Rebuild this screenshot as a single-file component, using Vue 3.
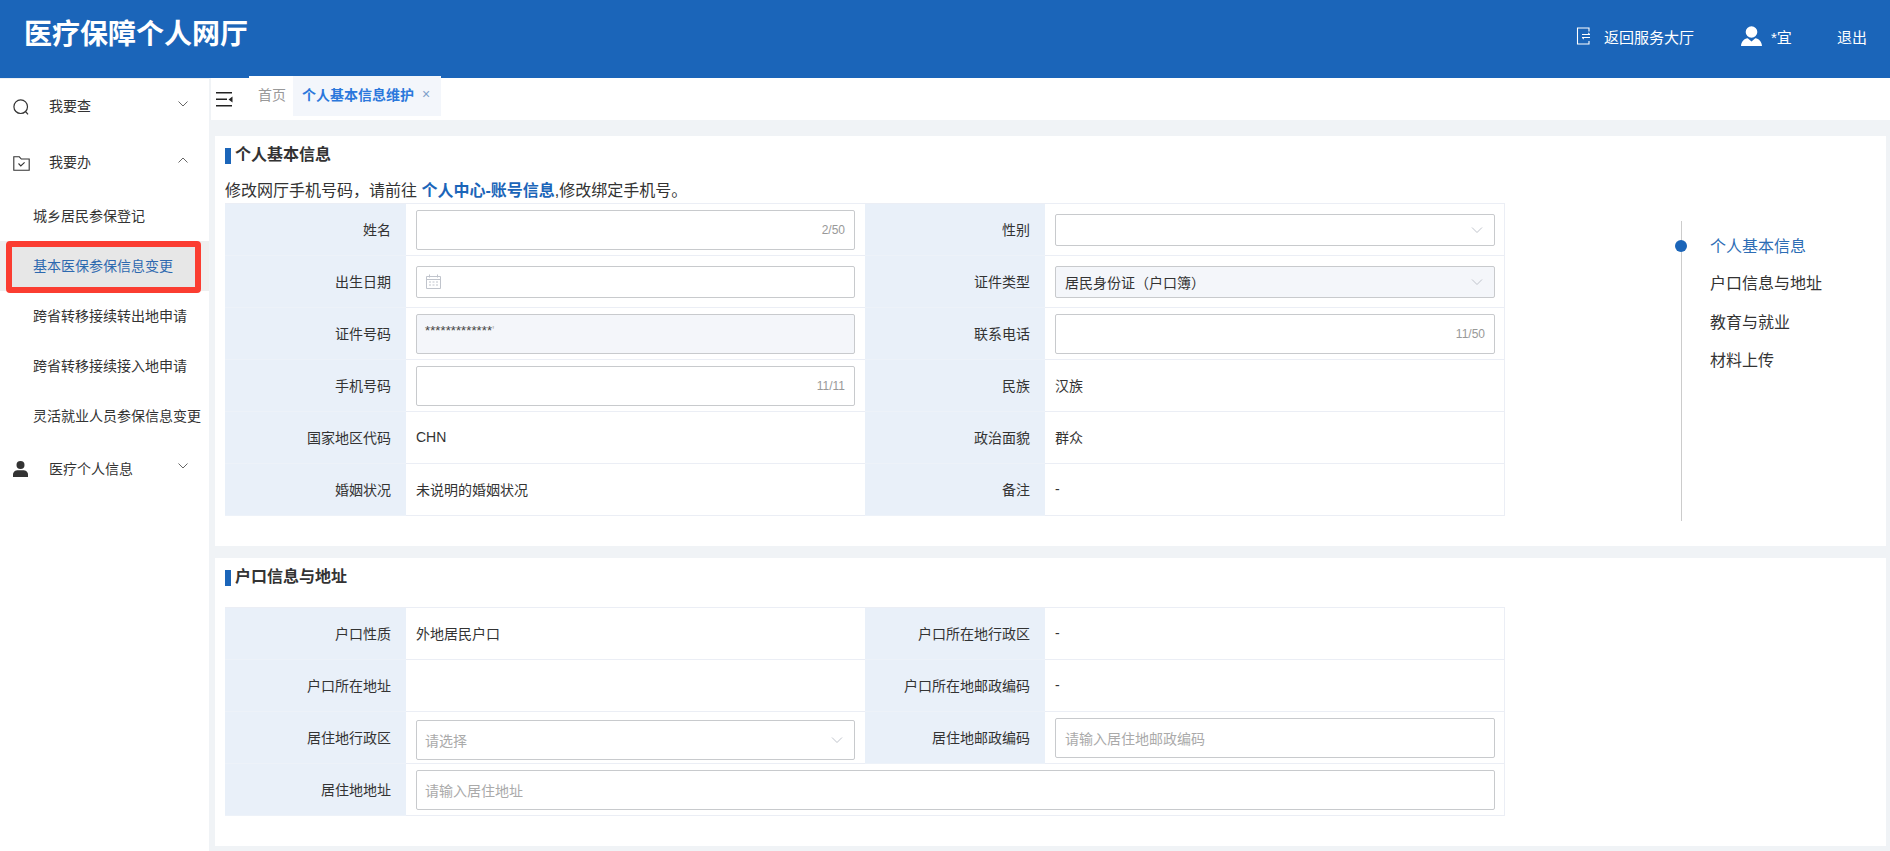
<script setup>
const subMenu = [
  { text: '城乡居民参保登记' },
  { text: '基本医保参保信息变更', active: true },
  { text: '跨省转移接续转出地申请' },
  { text: '跨省转移接续接入地申请' },
  { text: '灵活就业人员参保信息变更' }
]
const anchors = ['个人基本信息', '户口信息与地址', '教育与就业', '材料上传']
</script>

<template>
  <div class="page">
    <header class="top">
      <h1 class="brand">医疗保障个人网厅</h1>
      <div class="top-right">
        <span class="top-link return-link">
          <svg class="door" width="16" height="18" viewBox="0 0 16 18" fill="none" stroke="#fff" stroke-width="1.100">
            <path d="M13 4.500V1H1.500v16H13v-3" />
            <path d="M6 7.500h8l-2-1.600M14 10.500H6l2 1.600" stroke-width="1" />
          </svg>
          返回服务大厅
        </span>
        <span class="top-link user-link">
          <svg width="21" height="20" viewBox="0 0 21 20" fill="#fff">
            <circle cx="10.500" cy="6" r="5.800" />
            <path d="M0 20c.4-4.600 2.800-7 6.700-7.700l3.800 3.300 3.800-3.300c3.900.7 6.300 3.100 6.700 7.700z" />
          </svg>
          <span>*宜</span>
        </span>
        <span class="top-link">退出</span>
      </div>
    </header>

    <div class="body">
      <aside class="side">
        <div class="menu-item">
          <svg class="menu-icon" width="16" height="16" viewBox="0 0 16 16" fill="none" stroke="#333" stroke-width="1.200">
            <circle cx="7.700" cy="7.700" r="6.800" />
            <path d="M12.500 12.500l2.500 2.800" />
          </svg>
          <span class="menu-label">我要查</span>
          <svg class="chev" width="12" height="8" viewBox="0 0 12 8" fill="none" stroke="#666" stroke-width="1"><path d="M1.500 1.500L6 6l4.500-4.500" /></svg>
        </div>
        <div class="menu-item">
          <svg class="menu-icon" width="17" height="15" viewBox="0 0 17 15" fill="none" stroke="#333" stroke-width="1.100">
            <path d="M.8.800h5.500l2 2.200h7.900v11.200H.8z" />
            <path d="M5.500 7.500l2.300 2.400 3.800-3.600" />
          </svg>
          <span class="menu-label">我要办</span>
          <svg class="chev" width="12" height="8" viewBox="0 0 12 8" fill="none" stroke="#666" stroke-width="1"><path d="M1.500 6.500L6 2l4.500 4.500" /></svg>
        </div>
        <div
          v-for="item in subMenu"
          :key="item.text"
          class="sub-item"
          :class="{ active: item.active }"
        >
          {{ item.text }}
          <span v-if="item.active" class="highlight"></span>
        </div>
        <div class="menu-item">
          <svg class="menu-icon" width="15" height="16" viewBox="0 0 15 16" fill="#333">
            <circle cx="7.500" cy="4" r="4" />
            <path d="M0 16v-2.500C0 10.800 2.500 9.300 5 9.300h5c2.500 0 5 1.500 5 4.200V16z" />
          </svg>
          <span class="menu-label">医疗个人信息</span>
          <svg class="chev" width="12" height="8" viewBox="0 0 12 8" fill="none" stroke="#666" stroke-width="1"><path d="M1.500 1.500L6 6l4.500-4.500" /></svg>
        </div>
      </aside>

      <main class="main">
        <div class="tabbar">
          <svg class="collapse" width="17" height="15" viewBox="0 0 17 15" fill="#222">
            <rect x="0" y="0" width="16" height="1.500" />
            <rect x="0" y="6.500" width="11" height="1.500" />
            <rect x="0" y="13" width="16" height="1.500" />
            <path d="M16.500 4.500v6L12.500 7.500z" />
          </svg>
          <div class="tabs">
            <span class="tab">首页</span>
            <span class="tab current">个人基本信息维护<i class="close">×</i></span>
          </div>
        </div>

        <section class="card first">
          <h2 class="title">个人基本信息</h2>
          <p class="desc">修改网厅手机号码，请前往 <b>个人中心-账号信息</b>,修改绑定手机号。</p>
          <div class="table">
            <div class="lab">姓名</div>
            <div class="val">
              <div class="ctl tall"><span class="count">2/50</span></div>
            </div>
            <div class="lab">性别</div>
            <div class="val">
              <div class="ctl">
                <svg class="arrow" width="12" height="8" viewBox="0 0 12 8" fill="none" stroke="#c0c4cc" stroke-width="1"><path d="M1 1.500L6 6.500l5-5" /></svg>
              </div>
            </div>

            <div class="lab">出生日期</div>
            <div class="val">
              <div class="ctl">
                <svg class="cal" width="15" height="15" viewBox="0 0 15 15" fill="none" stroke="#c0c4cc" stroke-width="1">
                  <path d="M.5 2.500h14v12H.5zM.5 5.500h14M3.500.5v3M11.500.5v3" />
                  <path d="M3 8h2M6.500 8h2M10 8h2M3 11h2M6.500 11h2M10 11h2" />
                </svg>
              </div>
            </div>
            <div class="lab">证件类型</div>
            <div class="val">
              <div class="ctl off">
                <span>居民身份证（户口簿）</span>
                <svg class="arrow" width="12" height="8" viewBox="0 0 12 8" fill="none" stroke="#c0c4cc" stroke-width="1"><path d="M1 1.500L6 6.500l5-5" /></svg>
              </div>
            </div>

            <div class="lab">证件号码</div>
            <div class="val">
              <div class="ctl tall off"><span class="masked">*************<span class="faint">'</span></span></div>
            </div>
            <div class="lab">联系电话</div>
            <div class="val">
              <div class="ctl tall"><span class="count">11/50</span></div>
            </div>

            <div class="lab">手机号码</div>
            <div class="val">
              <div class="ctl tall"><span class="count">11/11</span></div>
            </div>
            <div class="lab">民族</div>
            <div class="val">汉族</div>

            <div class="lab">国家地区代码</div>
            <div class="val">CHN</div>
            <div class="lab">政治面貌</div>
            <div class="val">群众</div>

            <div class="lab">婚姻状况</div>
            <div class="val">未说明的婚姻状况</div>
            <div class="lab">备注</div>
            <div class="val">-</div>
          </div>

          <nav class="anchor">
            <span class="dot"></span>
            <a
              v-for="(a, i) in anchors"
              :key="a"
              class="anchor-link"
              :class="{ on: i === 0 }"
            >{{ a }}</a>
          </nav>
        </section>

        <section class="card second">
          <h2 class="title">户口信息与地址</h2>
          <div class="table">
            <div class="lab">户口性质</div>
            <div class="val">外地居民户口</div>
            <div class="lab">户口所在地行政区</div>
            <div class="val">-</div>

            <div class="lab">户口所在地址</div>
            <div class="val"></div>
            <div class="lab">户口所在地邮政编码</div>
            <div class="val">-</div>

            <div class="lab">居住地行政区</div>
            <div class="val low">
              <div class="ctl tall holder">
                <span>请选择</span>
                <svg class="arrow" width="12" height="8" viewBox="0 0 12 8" fill="none" stroke="#c0c4cc" stroke-width="1"><path d="M1 1.500L6 6.500l5-5" /></svg>
              </div>
            </div>
            <div class="lab">居住地邮政编码</div>
            <div class="val">
              <div class="ctl tall holder"><span>请输入居住地邮政编码</span></div>
            </div>

            <div class="lab">居住地地址</div>
            <div class="val wide">
              <div class="ctl tall holder"><span>请输入居住地址</span></div>
            </div>
          </div>
        </section>
      </main>
    </div>
  </div>
</template>

<style>
html, body { margin: 0; background: #f0f3f6; }
</style>

<style scoped>
.page {
  width: 1890px;
  height: 851px;
  overflow: hidden;
  display: flex;
  flex-direction: column;
  font-family: "Liberation Sans", "Noto Sans CJK SC", sans-serif;
  font-size: 14px;
  color: #333;
  background: #f0f3f6;
}
.top {
  height: 78px;
  flex: none;
  background: #1b65b9;
  color: #fff;
  display: flex;
  justify-content: space-between;
  padding: 0 23px 0 24px;
  box-sizing: border-box;
}
.brand {
  margin: 15px 0 0;
  font-size: 28px;
  line-height: 40px;
  font-weight: 700;
}
.top-right {
  display: flex;
  align-items: center;
  font-size: 15px;
  padding-bottom: 6px;
}
.top-link { display: flex; align-items: center; }
.return-link { width: 165px; gap: 12px; }
.user-link { width: 96px; gap: 9px; }
.body { flex: 1; display: flex; min-height: 0; }
.side {
  width: 209px;
  flex: none;
  background: #fff;
  box-sizing: border-box;
  border-top: 1px solid #eef1f4;
}
.menu-item {
  height: 56px;
  display: flex;
  align-items: center;
  padding-left: 13px;
  position: relative;
}
.menu-icon { flex: none; }
.menu-label { position: absolute; left: 49px; top: 16px; }
.menu-item:last-child .menu-label { top: 17px; }
.chev { position: absolute; left: 177px; top: 21px; }
.sub-item {
  height: 50px;
  line-height: 50px;
  padding-left: 33px;
  position: relative;
  white-space: nowrap;
}
.sub-item.active { background: #efefef; color: #2f6db5; }
.highlight {
  position: absolute;
  left: 5.500px;
  top: 0;
  width: 195px;
  height: 52px;
  box-sizing: border-box;
  border: 6px solid #fb3d31;
  border-radius: 4px;
  background: rgba(0, 0, 0, 0.03);
}
.main { flex: 1; min-width: 0; padding-left: 2px; }
.tabbar {
  height: 42px;
  background: #fff;
  display: flex;
  align-items: flex-start;
  position: relative;
}
.collapse { margin: 14px 0 0 5px; flex: none; }
.tabs {
  display: flex;
  margin: -2px 0 0 16px;
  position: relative;
  background: #fff;
  height: 40px;
}
.tab {
  display: flex;
  align-items: center;
  padding: 0 0 5px 9px;
  color: #999;
  width: 44px;
  box-sizing: border-box;
  white-space: nowrap;
}
.tab.current {
  width: 148px;
  background: #f3f6fb;
  color: #2b78dc;
  font-weight: 700;
}
.close {
  font-style: normal;
  font-weight: 400;
  margin-left: 8px;
  color: #7e9fca;
  font-size: 14px;
}
.card {
  margin: 0 4px 12px 4px;
  background: #fff;
  padding: 8px 10px 30px;
  position: relative;
}
.first { margin-top: 16px; }
.title {
  margin: 0;
  height: 22px;
  line-height: 22px;
  font-size: 16px;
  font-weight: 700;
  color: #333;
  display: flex;
  align-items: center;
}
.title::before {
  content: "";
  width: 6px;
  height: 16px;
  background: #1b65b9;
  margin-right: 4px;
  margin-top: 1px;
}
.second .title { margin-bottom: 19px; }
.desc {
  margin: 11px 0 0;
  height: 26px;
  line-height: 27px;
  font-size: 16px;
  color: #333;
}
.desc b { color: #1b65b9; font-weight: 700; }
.table {
  width: 1280px;
  display: grid;
  grid-template-columns: 181px 459px 180px 460px;
  grid-auto-rows: 52px;
  border-top: 1px solid #ebeef5;
  border-right: 1px solid #ebeef5;
  box-sizing: border-box;
}
.lab,
.val {
  border-bottom: 1px solid #ebeef5;
  display: flex;
  align-items: center;
  box-sizing: border-box;
  padding-bottom: 2px;
}
.lab {
  background: #e9f0f9;
  justify-content: flex-end;
  padding-right: 15px;
  border-bottom-color: #edf2f9;
}
.val { padding-left: 10px; padding-right: 10px; }
.wide { grid-column: span 3; }
.ctl {
  flex: 1;
  height: 32px;
  margin-top: 2px;
  border: 1px solid #c8cacd;
  border-radius: 2px;
  box-sizing: border-box;
  padding: 0 9px;
  display: flex;
  align-items: center;
  justify-content: space-between;
  background: #fff;
}
.low .ctl { margin-top: 6px; }
.table > .val:nth-child(4n + 2) .ctl { padding-left: 8px; }
.cal { margin-left: 1px; }
.tall { height: 40px; }
.off { background: #f4f6fa; }
.count { margin-left: auto; font-size: 12px; color: #999; }
.masked { margin-top: -6px; font-size: 13px; color: #444; letter-spacing: 0.1px; }
.faint { color: #bbb; }
.holder { color: #aaa; }
.arrow { margin-left: auto; margin-right: 2px; }
.anchor {
  position: absolute;
  left: 1466px;
  top: 85px;
  height: 300px;
  width: 180px;
  border-left: 1px solid #ccc;
  box-sizing: border-box;
  padding: 6px 0 0 28px;
  display: flex;
  flex-direction: column;
}
.dot {
  position: absolute;
  left: -7px;
  top: 19px;
  width: 12px;
  height: 12px;
  border-radius: 50%;
  background: #1b65b9;
}
.anchor-link {
  height: 38.300px;
  line-height: 38.300px;
  font-size: 16px;
  color: #333;
}
.anchor-link.on { color: #2d6db5; line-height: 40px; }
</style>
